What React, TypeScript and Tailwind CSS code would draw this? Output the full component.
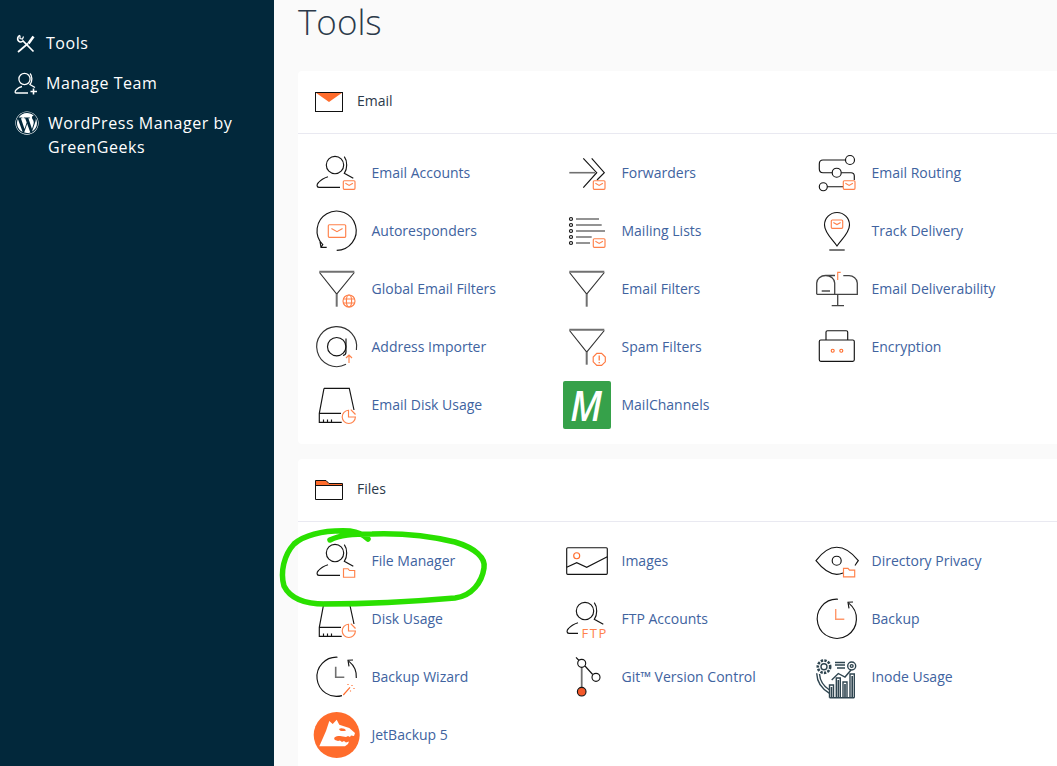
import type { ReactNode } from "react"
import { FaWordpress } from "react-icons/fa"

const orange = "#ff6c2c"
const dark = "#141414"
const gray = "#707070"

function Svg({ children }: { children: ReactNode }) {
  return (
    <svg viewBox="0 0 48 48" className="h-12 w-12 shrink-0" fill="none" stroke={dark} strokeWidth="1.15">
      {children}
    </svg>
  )
}

// small orange badges used by many of the icons
function Envelope({ x = 30.3, y = 31.7, w = 11.7, h = 8.6 }: { x?: number; y?: number; w?: number; h?: number }) {
  return (
    <g stroke={orange} opacity="0.85">
      <rect x={x} y={y} width={w} height={h} rx="1" />
      <path d={`M${x + w * 0.18} ${y + h * 0.3} L${x + w / 2} ${y + h * 0.55} L${x + w * 0.82} ${y + h * 0.3}`} />
    </g>
  )
}

function FolderBadge({ y = 31.7 }: { y?: number }) {
  return (
    <path
      d={`M30.5 ${y + 8.5} V${y} H35 L36.5 ${y + 1.8} H41.7 V${y + 8.5} Z`}
      stroke={orange}
      opacity="0.85"
    />
  )
}

function Person({ short }: { short?: boolean }) {
  return (
    <>
      <circle cx="22" cy="16" r="8.7" />
      <path d="M31.3 7.7 C34.5 12 34.5 20 31.3 24.3 L40.3 29.3" />
      <path d={`M${short ? 15 : 27} 38.3 H6 C3.5 38.3 3.5 35.5 5.5 33.5 C8 30.5 11 29 15 27.7`} />
    </>
  )
}

function Funnel() {
  return (
    <>
      <path d="M6.5 7.5 L23.7 29 L41.3 7.5" stroke="#333" />
      <path d="M6.3 6.7 H41.3" stroke={gray} strokeWidth="2" />
      <path d="M23.7 29 V41.7" stroke={gray} strokeWidth="2" />
    </>
  )
}

function Disk() {
  return (
    <>
      <path d="M11 7.3 H36.3 L41 29 M11 7.3 L6.3 32.3 V41.3 H28.7 M6.3 32.3 H28 M10.5 41 V38.5 M14.5 41 V38.5 M18.5 41 V38.5" />
      <path d="M35.5 29.3 A6.6 6.6 0 1 0 42.4 36 H35.5 Z" stroke={orange} opacity="0.85" />
      <path d="M37.8 28.7 L42.5 33.5" stroke={orange} opacity="0.85" />
    </>
  )
}

const icons: Record<string, ReactNode> = {
  "Email Accounts": (
    <Svg>
      <Person />
      <Envelope />
    </Svg>
  ),
  Forwarders: (
    <Svg>
      <path d="M6.3 23.7 H32" stroke={gray} strokeWidth="1.6" />
      <path d="M20.3 9.3 L33.7 23.7 L20.3 38.7 M28.7 9.3 L41.3 23.7 L34 31" />
      <Envelope />
    </Svg>
  ),
  "Email Routing": (
    <Svg>
      <circle cx="37" cy="11" r="4.5" />
      <circle cx="23.7" cy="23.7" r="4.5" />
      <circle cx="10.3" cy="37.7" r="4" />
      <path d="M32.5 11 H10 Q6.3 11 6.3 15 V20 Q6.3 23.7 10 23.7 H19.2 M28.2 23.7 H38 Q41.3 23.7 41.3 27 V31 M14.3 37.7 H30" />
      <Envelope />
    </Svg>
  ),
  Autoresponders: (
    <Svg>
      <path d="M23.7 43.3 A19.6 19.6 0 1 0 9.8 37.6 L8 40.3 M13.7 40.3 H8 L7 34.7" />
      <Envelope x={15.3} y={17.7} w={17.4} h={12.6} />
    </Svg>
  ),
  "Mailing Lists": (
    <Svg>
      <g strokeWidth="1.2">
        <circle cx="8" cy="12" r="1.5" />
        <circle cx="8" cy="18" r="1.5" />
        <circle cx="8" cy="24" r="1.5" />
        <circle cx="8" cy="30" r="1.5" />
        <circle cx="8" cy="36" r="1.5" />
      </g>
      <path d="M13 12 H36 M13 18 H38.7 M13 24 H42 M13 30 H28.7 M13 36 H27" stroke={gray} strokeWidth="1.6" />
      <Envelope />
    </Svg>
  ),
  "Track Delivery": (
    <Svg>
      <path d="M24 39 C20 33 11.5 26 11.5 18 A12.5 12.5 0 0 1 36.5 18 C36.5 26 28 33 24 39 Z" />
      <path d="M16.3 43 H31.7" />
      <Envelope x={18.3} y={13} w={11.4} h={8.3} />
    </Svg>
  ),
  "Global Email Filters": (
    <Svg>
      <Funnel />
      <g stroke={orange} opacity="0.85">
        <circle cx="36" cy="36" r="6" />
        <ellipse cx="36" cy="36" rx="2.6" ry="6" />
        <path d="M30 34 H42 M30 38 H42" />
      </g>
    </Svg>
  ),
  "Email Filters": (
    <Svg>
      <Funnel />
    </Svg>
  ),
  "Email Deliverability": (
    <Svg>
      <path d="M3.7 29.3 V18 A9 7.5 0 0 1 21.7 18 V29.3 M3.7 29.3 H44.3 V18 C44.3 13.5 40 10.7 36 10.7 H30.3 M12.7 10.5 H22" stroke="#444" strokeWidth="1.3" />
      <path d="M8.7 26 H17" />
      <path d="M24.7 29.3 V40.7 M18.7 40.7 H31" stroke="#444" strokeWidth="1.3" />
      <path d="M24.7 15 V7.3 H27.7" stroke={orange} opacity="0.85" />
    </Svg>
  ),
  "Address Importer": (
    <Svg>
      <path d="M33 41.3 A20 20 0 1 1 43.4 27" stroke="#333" />
      <circle cx="23.7" cy="23.7" r="9.2" />
      <path d="M33 15.5 V29 Q33 32 30 32.5" />
      <path d="M36 40 V32 M33 35 L36 32 L39 35" stroke={orange} opacity="0.85" />
    </Svg>
  ),
  "Spam Filters": (
    <Svg>
      <Funnel />
      <path d="M33.8 30.3 H38.6 L42.3 34 V38.8 L38.6 42.4 H33.8 L30.2 38.8 V34 Z" stroke={orange} opacity="0.9" />
      <path d="M36.2 32.5 V37.5 M36.2 39 V40.3" stroke={orange} />
    </Svg>
  ),
  Encryption: (
    <Svg>
      <rect x="6.3" y="17" width="35" height="21.3" rx="1.5" />
      <path d="M13 17 V9 Q13 7.7 14.5 7.7 H33.2 Q34.7 7.7 34.7 9 V17" />
      <circle cx="19.7" cy="27.7" r="1.5" stroke={orange} />
      <circle cx="28.3" cy="27.7" r="1.5" stroke={orange} />
    </Svg>
  ),
  "Email Disk Usage": (
    <Svg>
      <Disk />
    </Svg>
  ),
  MailChannels: (
    <div className="flex h-12 w-12 shrink-0 items-center justify-center rounded-[2px] bg-[#36a14a]">
      <span className="scale-x-[0.88] pr-[2px] text-[42px] leading-none font-semibold text-white italic">M</span>
    </div>
  ),
  "File Manager": (
    <Svg>
      <Person />
      <FolderBadge />
    </Svg>
  ),
  Images: (
    <Svg>
      <rect x="3.7" y="10.7" width="40.6" height="26.6" rx="1" />
      <circle cx="13.7" cy="18.7" r="3" stroke={orange} />
      <path d="M3.7 30.3 L13.7 25.7 L23.7 30.3 L44.3 19.7" />
    </Svg>
  ),
  "Directory Privacy": (
    <Svg>
      <path d="M30 36 C27.5 37 25.5 37.3 23.7 37.3 C15 37.3 8 30 3 23.7 C8 17 15 10.3 23.7 10.3 C32 10.3 40 17 45.3 23.7 C44 25.5 43 27 42 28.5" />
      <circle cx="23.7" cy="23.7" r="4.5" />
      <FolderBadge y={31.3} />
    </Svg>
  ),
  "Disk Usage": (
    <Svg>
      <Disk />
    </Svg>
  ),
  "FTP Accounts": (
    <Svg>
      <Person short />
      <text
        x="18.5"
        y="42.5"
        fill={orange}
        stroke="none"
        fontSize="13"
        letterSpacing="1.6"
        opacity="0.85"
        fontFamily="'Open Sans', sans-serif"
      >
        FTP
      </text>
    </Svg>
  ),
  Backup: (
    <Svg>
      <path d="M25 4.2 A19.6 19.6 0 1 0 36 8.4 M40 7 L35 7.3 L36 13.3" />
      <path d="M22.7 14 V24.3 H31.3" stroke={orange} strokeWidth="1.4" opacity="0.7" />
    </Svg>
  ),
  "Backup Wizard": (
    <Svg>
      <path d="M24.5 4.2 A19.6 19.6 0 1 0 29 42.6 M43.3 25 A19.6 19.6 0 0 0 36 8.4 M40 7 L35 7.3 L36 13.3" />
      <path d="M22.7 13.7 V24.3 H31.3" stroke={gray} strokeWidth="1.6" />
      <path d="M30.3 42 L37 34.3" stroke={orange} />
      <path d="M35 31 V33 M39 32 V34 M41 35 V37 M37.5 37.5 V39" stroke={orange} strokeDasharray="1 1" />
    </Svg>
  ),
  "Git™ Version Control": (
    <Svg>
      <path d="M13 4.3 L16 7.5 M22 13 L29.7 21.5" />
      <path d="M18.7 14.3 V34.3" stroke={gray} strokeWidth="1.8" />
      <circle cx="18.7" cy="10.3" r="4" />
      <circle cx="33" cy="24.3" r="4" />
      <circle cx="18.7" cy="38.7" r="4.3" fill="#f4592a" />
    </Svg>
  ),
  "Inode Usage": (
    <Svg>
      <g stroke="#2f4550" strokeWidth="1.4">
        <circle cx="11" cy="13.7" r="3" />
        <circle cx="11" cy="13.7" r="6.2" strokeDasharray="2.4 1.2" strokeWidth="2.6" />
        <circle cx="38.7" cy="13" r="4" />
        <circle cx="38.7" cy="13" r="1.4" />
        <path d="M22 9.5 H32 M22 12 H32 M24 15 H32" />
        <path d="M3.7 20.3 C4 30 9 36 16.5 40.3 M6.5 21 C7 28 11 33.5 16.5 37" />
        <path d="M18.7 27 L25.3 20.5 L32 24 L38 17" />
        <path d="M16.5 44.7 V32 H20.5 V44.7 M23.3 44.7 V25 H27.3 V44.7 M30 44.7 V29 H34 V44.7 M37 44.7 V21 H41.3 V44.7 M16.5 44.7 H41.3" />
        <path d="M18.5 34 V44 M25.3 27 V44 M32 31 V44 M39.2 23 V44" strokeWidth="1.6" />
      </g>
    </Svg>
  ),
  "JetBackup 5": (
    <svg viewBox="0 0 48 48" className="h-12 w-12 shrink-0">
      <circle cx="23.7" cy="24" r="23" fill={orange} />
      <path
        d="M6.3 35.3 L13 20 L16.3 10 L19.7 13 L23.7 8.7 L26.3 13.7 L36.3 17 L42 22 L41 25 L38 24.5 L37 26 L35 25 L33 26 L27 25 C22 25 20 27 22 29 L25 30 L27 29.5 L29 31 L31 30 L33 31.5 L36 30.5 L35 33 L32 35.3 Z"
        fill="#fff"
      />
      <path d="M26 18 C28 16.5 32 17.5 33 19.5 C30 20.5 27 20.5 26 18 Z" fill={orange} />
    </svg>
  ),
}

const emailItems = [
  "Email Accounts",
  "Forwarders",
  "Email Routing",
  "Autoresponders",
  "Mailing Lists",
  "Track Delivery",
  "Global Email Filters",
  "Email Filters",
  "Email Deliverability",
  "Address Importer",
  "Spam Filters",
  "Encryption",
  "Email Disk Usage",
  "MailChannels",
]

const fileItems = [
  "File Manager",
  "Images",
  "Directory Privacy",
  "Disk Usage",
  "FTP Accounts",
  "Backup",
  "Backup Wizard",
  "Git™ Version Control",
  "Inode Usage",
  "JetBackup 5",
]

function Section({ title, icon, items }: { title: string; icon: ReactNode; items: string[] }) {
  return (
    <section className="-mr-5 rounded-[4px] bg-white">
      <div className="flex h-[63px] items-center gap-[14px] border-b border-[#e9e9f1] pl-[17px] text-sm text-[#2c3a4a]">
        {icon}
        <span className="-mt-[2px]">{title}</span>
      </div>
      <div className="grid grid-cols-[repeat(3,250px)] gap-y-[10px] pt-[15px] pb-[15px] pl-[15px]">
        {items.map((name) => (
          <a key={name} className="flex h-12 items-center gap-[10.5px] text-sm text-[#40639f]">
            {icons[name]}
            <span>{name}</span>
          </a>
        ))}
      </div>
    </section>
  )
}

export default function App() {
  return (
    <div className="relative flex h-[766px] w-full overflow-hidden bg-[#fafafa] font-['Open_Sans',sans-serif]">
      {/* Sidebar */}
      <aside className="w-[274px] shrink-0 bg-[#02283b] pt-[31px] text-base tracking-[0.55px] text-white">
        <nav className="flex flex-col gap-4">
          <div className="flex items-center gap-2 pl-[14px]">
            <svg viewBox="0 0 24 24" className="h-6 w-6" fill="none" stroke="#fff" strokeWidth="1.7">
              <path d="M6 4.5 C3.5 5 3 8.5 4.5 10 C6 11.5 8 11 9 10 L19.5 20.5" />
              <path d="M6 4.5 V7.5 L8.5 8 L9.5 5.5" strokeWidth="1.2" />
              <path d="M14 12.5 L4 21" />
              <path d="M19.5 5.5 L14.5 12.5" strokeWidth="2.6" />
            </svg>
            <span className="leading-6">Tools</span>
          </div>
          <div className="flex items-center gap-2 pl-[14px]">
            <svg viewBox="0 0 24 24" className="h-6 w-6" fill="none" stroke="#fff" strokeWidth="1.3">
              <circle cx="10.5" cy="8" r="5.6" />
              <path d="M16 2.5 C18.5 5 18.5 10 16 13.5 L21 16.5" />
              <path d="M14 22 H2 C0.8 22 0.8 20 2.5 18.5 C4 17 6 16 8 15.5" />
              <path d="M19.5 17.5 V23.5 M16.5 20.5 H23" strokeWidth="1.6" />
            </svg>
            <span className="leading-6">Manage Team</span>
          </div>
          <div className="flex items-start gap-[9px] pl-[15px]">
            <FaWordpress className="h-6 w-6 shrink-0" />
            <span className="w-[200px] leading-6">WordPress Manager by GreenGeeks</span>
          </div>
        </nav>
      </aside>

      {/* Main */}
      <main className="min-w-0 flex-1 pl-6">
        <h1 className="mb-[27px] h-11 text-[35px] leading-11 font-light text-[#2c3a4a]">Tools</h1>
        <div className="flex flex-col gap-[15px]">
          <Section
            title="Email"
            items={emailItems}
            icon={
              <svg viewBox="0 0 28 20" className="h-5 w-7" fill="none">
                <path d="M0.5 0.5 H27.5 L14 10 Z" fill={orange} />
                <rect x="0.5" y="0.5" width="27" height="19" stroke="#111" />
              </svg>
            }
          />
          <Section
            title="Files"
            items={fileItems}
            icon={
              <svg viewBox="0 0 28 20" className="h-5 w-7" fill="none">
                <path d="M0.5 5.5 V0.5 H11 L14 3.5 H27.5 V5.5 Z" fill={orange} />
                <path d="M0.5 19.5 V0.5 H11 L14 3.5 H27.5 V19.5 Z M0.5 5.5 H27.5" stroke="#111" />
              </svg>
            }
          />
        </div>
      </main>

      {/* Hand drawn highlight over File Manager */}
      <svg className="pointer-events-none absolute inset-0 h-[766px] w-[1057px]" viewBox="0 0 1057 766" fill="none">
        <path
          d="M330 540 C340 535 352 534 372 534 C400 533 430 536 455 542 C475 548 486 558 484 568 C482 582 472 596 455 598 C420 601 370 604 325 604 C305 604 290 598 284 586 C280 572 284 555 294 544 C305 535 325 530 350 531 C358 532 364 535 368 539"
          stroke="#2ae000"
          strokeWidth="5.5"
          strokeLinecap="round"
        />
      </svg>
    </div>
  )
}
